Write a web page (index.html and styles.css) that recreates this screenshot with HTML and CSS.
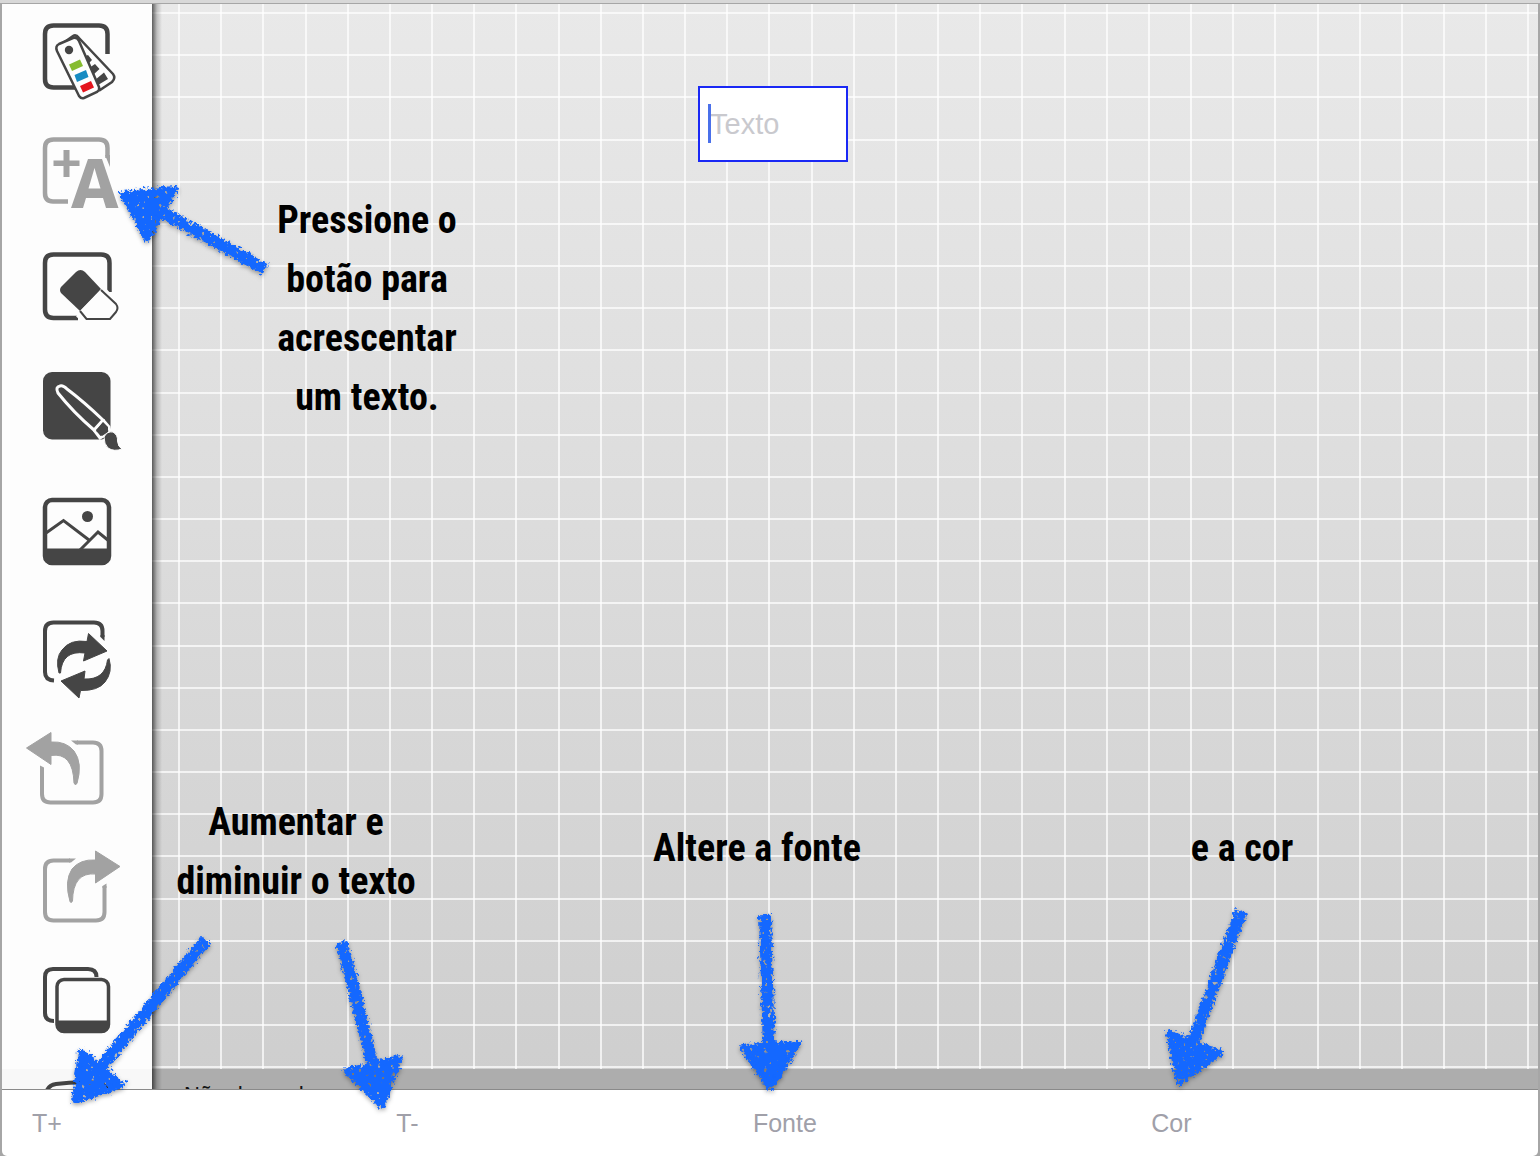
FILE: index.html
```html
<!DOCTYPE html>
<html lang="pt">
<head>
<meta charset="utf-8">
<title>Texto</title>
<link rel="stylesheet" href="styles.css">
</head>
<body>
<div class="app">
  <nav class="tools" aria-label="Ferramentas">
    <button class="tool" aria-label="Cores">
      <svg viewBox="2 4 150 118">
        <path class="frame" d="M107.500 54V34Q107.500 25.500 99 25.500H53.500Q45 25.500 45 34V79Q45 87.500 53.500 87.500H78"/>
        <path class="card" d="M66 41L73 36Q76 34 79 38L113 74Q116 78 112 82L100 90Z"/>
        <path class="fill" d="M83 57L88 55L92 60L87 65ZM89 68L95 64L99.500 69L93 75ZM95 80L104 72.500L108 79L98 85Z"/>
        <path class="card" d="M59 44L73 38Q77 37 79 41L99 87Q100 90 97 92L84 98Q81 99 79 96L57 51Q55 46 59 44Z"/>
        <circle class="fill" cx="69" cy="50" r="4.200"/>
        <path fill="#86bc2f" d="M69 64.500L80 59.500L83 66L72 71Z"/>
        <path fill="#168bc2" d="M74.500 75L86 70L88.500 77L77 82Z"/>
        <path fill="#e4141d" d="M80 86L91 81L94 87.500L83 92.500Z"/>
      </svg>
    </button>
    <button class="tool off" aria-label="Texto">
      <svg viewBox="2 122 150 118">
        <path class="frame" d="M68 201.500H53Q45 201.500 45 193V148Q45 139.500 53.500 139.500H99Q107.500 139.500 107.500 148V158"/>
        <path class="fill" d="M105 155L110 155V167Z"/>
        <path class="fill" d="M63.500 150H69.500V160.500H79.500V166H69.500V177H63.500V166H53.500V160.500H63.500Z"/>
        <path class="fill" fill-rule="evenodd" d="M88 159H102L118.500 208H106L103 198H86L83 208H71ZM94.500 168L88.500 188.500H100.500Z"/>
      </svg>
    </button>
    <button class="tool" aria-label="Borracha">
      <svg viewBox="2 240 150 118">
        <path class="frame" d="M78 318H53.500Q45 318 45 309.500V263Q45 254.500 53.500 254.500H101Q109.500 254.500 109.500 263V292"/>
        <path class="halo" d="M102 291L118 307L110 319H86L79 313"/>
        <path class="fill" d="M61 287L76 272Q80.500 268 85 272L101 289L80 311L61 293Q59 290 61 287Z"/>
        <path class="thin" d="M101 290L116 304Q119 308 116 312L110 319H86.500L80 311"/>
      </svg>
    </button>
    <button class="tool" aria-label="Pincel">
      <svg viewBox="2 358 150 118">
        <rect class="fill" x="43" y="372" width="67.500" height="67.500" rx="9"/>
        <path class="outline" d="M58 393Q55 387 60 386Q63 385 67 389Q83 401 103 420L94 430Q73 412 58 393Z"/>
        <path class="outline" d="M103 420L109 427L110 432L100 438L94 430"/>
        <path class="fill" d="M103 422L108 427V432L102 436L96 431Z"/>
        <path class="fill edge" d="M104 437Q107 431 113 432Q118 435 117.500 441Q118 447 122 449Q114 452 108 448Q104 444 104 437Z"/>
      </svg>
    </button>
    <button class="tool" aria-label="Imagem">
      <svg viewBox="2 476 150 118">
        <rect class="frame" x="45" y="500" width="64" height="63" rx="7"/>
        <path class="fill" d="M44 548.500H110V558Q109 564 102 565H52Q45 564 44 558Z"/>
        <circle class="fill" cx="87.500" cy="516.500" r="5.500"/>
        <path class="line" d="M46 533L63.500 520.500L89 540M80 550L98 532L109 541"/>
      </svg>
    </button>
    <button class="tool" aria-label="Atualizar">
      <svg viewBox="2 594 150 118">
        <path class="frame slim" d="M54 680.500Q45 680 45 672V631Q45 622.500 53.500 622.500H94Q102.500 622.500 102.500 631V637"/>
        <path class="fill" d="M100.500 635H104.500V641L100.500 637Z"/>
        <path class="fill round" d="M59 673Q55 658 62 650Q70 639 87 641.500L88.500 633.500L107 651L83.500 661L85 653Q62 650 60.500 673Z"/>
        <path class="fill round" d="M109 658.500Q113 672 105 682Q98 691 80.500 690.500L79 698L61 681L85 671L84 679Q105 680 107.500 660Z"/>
      </svg>
    </button>
    <button class="tool off" aria-label="Desfazer">
      <svg viewBox="2 712 150 118">
        <path class="frame slim" d="M42 768V794Q42 802.500 50.500 802.500H93Q101.500 802.500 101.500 794V751Q101.500 742.500 93 742.500H77"/>
        <path class="fill" d="M40 765.500L44 767.500V771H40ZM71 740.500H78V744.500H76Z"/>
        <path class="fill round" d="M26.500 748L51 732.500V742Q66 741 74 751Q83 763 77 783.500Q75 786 74 783Q73 752 51 755.500V764.500Z"/>
      </svg>
    </button>
    <button class="tool off" aria-label="Refazer">
      <svg viewBox="2 830 150 118">
        <path class="frame slim" d="M104.500 886V912Q104.500 920.500 96 920.500H53.500Q45 920.500 45 912V869Q45 860.500 53.500 860.500H70"/>
        <path class="fill" d="M102.500 886L106.500 883.500V888H102.500ZM69 858.500H76L71 862.500H69Z"/>
        <path class="fill round" d="M120 866.500L95.500 851V860Q80 859 72 869Q64 881 70 901.500Q71 904 72.500 901Q73 872 95.500 874V883Z"/>
      </svg>
    </button>
    <button class="tool" aria-label="Páginas">
      <svg viewBox="2 948 150 118">
        <path class="frame slim" d="M54 1021Q45 1021 45 1013V977Q45 969 53 969H88Q96.500 969 96.500 977"/>
        <rect class="card page" x="57" y="979.500" width="51.500" height="52" rx="7"/>
        <path class="fill" d="M56 1020.500H110V1024Q109 1032 102 1033H64Q57 1032 56 1024Z"/>
      </svg>
    </button>
    <button class="tool" aria-label="Mais">
      <svg viewBox="2 1066 150 118">
        <path class="frame slim" d="M46 1093Q48 1085 56 1084Q78 1081 99 1083Q107 1085 108 1093V1140H46Z"/>
      </svg>
    </button>
  </nav>

  <main class="board">
    <svg class="grid" aria-hidden="true">
      <defs>
        <pattern id="cells" x="26" y="8" width="253" height="253" patternUnits="userSpaceOnUse">
          <path d="M1 0V253M43 0V253M85 0V253M128 0V253M170 0V253M212 0V253"/>
          <path d="M0 1H253M0 43H253M0 85H253M0 128H253M0 170H253M0 212H253"/>
        </pattern>
      </defs>
      <rect width="100%" height="100%" fill="url(#cells)"/>
    </svg>
    <input class="entry" type="text" placeholder="Texto" aria-label="Texto">
    <span class="caret"></span>
    <p class="status">Não de modo</p>
  </main>

  <footer class="bar">
    <button class="action">T+</button>
    <button class="action">T-</button>
    <button class="action">Fonte</button>
    <button class="action">Cor</button>
  </footer>
</div>

<p class="note note-add">Pressione o<br>botão para<br>acrescentar<br>um texto.</p>
<p class="note note-size">Aumentar e<br>diminuir o texto</p>
<p class="note note-font">Altere a fonte</p>
<p class="note note-color">e a cor</p>

<svg class="arrows" aria-hidden="true">
  <defs>
    <filter id="crayon" filterUnits="userSpaceOnUse" x="0" y="0" width="1540" height="1156" color-interpolation-filters="sRGB">
      <feTurbulence type="fractalNoise" baseFrequency="0.35" numOctaves="2" seed="4" result="noise"/>
      <feDisplacementMap in="SourceGraphic" in2="noise" scale="9" xChannelSelector="R" yChannelSelector="G" result="rough"/>
      <feTurbulence type="fractalNoise" baseFrequency="0.22" numOctaves="2" seed="9"/>
      <feColorMatrix values="0 0 0 0 0  0 0 0 0 0  0 0 0 0 0  0 0 0 -16 12" result="grain"/>
      <feComposite in="rough" in2="grain" operator="in" result="mark"/>
      <feDropShadow dx="0" dy="2" stdDeviation="2" flood-opacity="0.35"/>
    </filter>
  </defs>
  <g filter="url(#crayon)">
    <path d="M265 269L160 211"/><path class="head" d="M123 194L175 189L147 239Z"/>
    <path d="M206 940L100 1068"/><path class="head" d="M81 1051L123 1085L75 1101Z"/>
    <path d="M342 942L374 1070"/><path class="head" d="M347 1071L400 1058L382 1106Z"/>
    <path d="M765 915L769 1050"/><path class="head" d="M743 1047L798 1044L770 1088Z"/>
    <path d="M1241 911L1192 1045"/><path class="head" d="M1169 1033L1220 1053L1179 1082Z"/>
  </g>
</svg>
</body>
</html>
```
FILE: styles.css
```css
* { box-sizing: border-box; }

body {
  margin: 0;
  position: relative;
  min-height: 100vh;
  overflow: hidden;
  background: #b4b4b4;
  font-family: "Liberation Sans", Arial, sans-serif;
}

button {
  margin: 0;
  padding: 0;
  border: 0;
  background: none;
  font: inherit;
}

.app {
  display: grid;
  grid-template-columns: 150px 1fr;
  grid-template-rows: 1fr 67px;
  height: 100vh;
  padding: 1px 2px 0;
  border-top: 3px solid #d8d8d8;
  background: #a6a6a6;
}

.tools {
  position: relative;
  z-index: 1;
  display: flex;
  flex-direction: column;
  min-height: 0;
  overflow: hidden;
  background: #fdfdfd;
}

.tools::after {
  content: "";
  position: absolute;
  inset: auto 0 0;
  height: 20px;
  background: rgb(0 0 0 / 2%);
}

.tool { flex: none; height: 118px; }
.tool svg { display: block; width: 150px; height: 118px; color: #454545; }
.off svg { color: #a2a2a2; }
.frame { fill: none; stroke: currentColor; stroke-width: 4.5; }
.slim { stroke-width: 4; }
.fill { fill: currentColor; }
.round { stroke: currentColor; stroke-width: 1; stroke-linejoin: round; }
.card { fill: #fdfdfd; stroke: currentColor; stroke-width: 2.5; }
.page { stroke-width: 3.5; }
.halo { fill: #fdfdfd; stroke: #fdfdfd; stroke-width: 9; }
.thin { fill: #fdfdfd; stroke: currentColor; stroke-width: 2; }
.outline { fill: none; stroke: #fdfdfd; stroke-width: 3; }
.edge { stroke: #fdfdfd; stroke-width: 1; }
.line { fill: none; stroke: currentColor; stroke-width: 3; }

.board {
  position: relative;
  min-height: 0;
  overflow: hidden;
  background: linear-gradient(#e9e9e9, #cecece);
}

.board::before {
  content: "";
  position: absolute;
  z-index: 1;
  inset: 0 auto 0 0;
  width: 10px;
  background: linear-gradient(90deg, rgb(0 0 0 / 60%), rgb(0 0 0 / 18%) 50%, transparent);
}

.grid { display: block; width: 100%; height: 100%; }
.grid path { fill: none; stroke: #fff; stroke-opacity: 0.7; stroke-width: 2; }

.entry {
  position: absolute;
  left: 546px;
  top: 82px;
  width: 150px;
  height: 76px;
  padding: 0 10px;
  border: 2px solid #1a28f5;
  outline: 0;
  background: #fff;
  font: 29px "Liberation Sans", Arial, sans-serif;
}

.entry::placeholder { color: #c9c9ce; opacity: 1; }

.caret {
  position: absolute;
  left: 556px;
  top: 100px;
  width: 3px;
  height: 39px;
  background: #4a70ea;
}

.status {
  position: absolute;
  inset: auto 0 0;
  height: 20px;
  margin: 0;
  padding: 13px 0 0 32px;
  overflow: hidden;
  background: #adadad;
  color: #111;
  font-size: 22px;
  line-height: 26px;
}

.bar {
  grid-column: 1 / -1;
  display: flex;
  align-items: center;
  padding: 0 12px 0 30px;
  border-top: 1px solid #8a8a8a;
  border-radius: 0 0 5px 5px;
  background: #fff;
}

.action { margin-right: auto; color: #a0a0a9; font-size: 25px; line-height: 30px; }

.note {
  position: absolute;
  margin: 0;
  color: #000;
  font: bold 38px/59px "Roboto Condensed", "Liberation Sans Narrow", "DejaVu Sans Condensed", sans-serif;
  text-align: center;
  white-space: nowrap;
}

.note-add { left: 247px; top: 191px; width: 240px; }
.note-size { left: 176px; top: 793px; width: 240px; }
.note-font { left: 637px; top: 819px; width: 240px; }
.note-color { left: 1122px; top: 819px; width: 240px; }

.arrows { position: absolute; z-index: 2; inset: 0; width: 100%; height: 100%; pointer-events: none; }
.arrows path { fill: none; stroke: #1468ff; stroke-width: 12; }
.arrows .head { fill: #1468ff; stroke-width: 6; stroke-linejoin: round; }
```
